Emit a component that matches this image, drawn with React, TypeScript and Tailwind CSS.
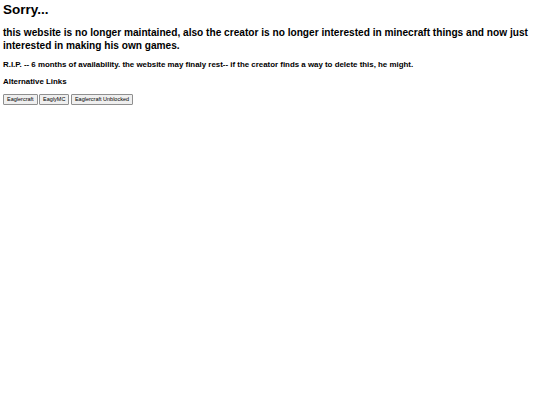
export default function App() {
  return (
    <div className="min-h-screen bg-white text-black px-[3px] pt-[1px]" style={{ fontFamily: '"Liberation Sans", Arial, sans-serif' }}>
      <h1 className="text-[13.5px] font-bold leading-[18px]">Sorry...</h1>
      <h2 className="mt-[8px] text-[10.15px] font-bold leading-[12.5px]">
        this website is no longer maintained, also the creator is no longer interested in minecraft things and now just
        interested in making his own games.
      </h2>
      <h4 className="mt-[8px] text-[7.9px] font-bold leading-[10px]">
        R.I.P. -- 6 months of availability. the website may finaly rest-- if the creator finds a way to delete this, he might.
      </h4>
      <h4 className="mt-[7px] text-[7.9px] font-bold leading-[10px]">Alternative Links</h4>
      <div className="mt-[7px] flex gap-[1.5px]">
        {["Eaglercraft", "EaglyMC", "Eaglercraft Unblocked"].map((l) => (
          <button
            key={l}
            className="text-[5.5px] leading-[6.5px] px-[3px] py-[1px] bg-[#efefef] border border-[#8f8f8f] rounded-[1px]"
          >
            {l}
          </button>
        ))}
      </div>
    </div>
  );
}
